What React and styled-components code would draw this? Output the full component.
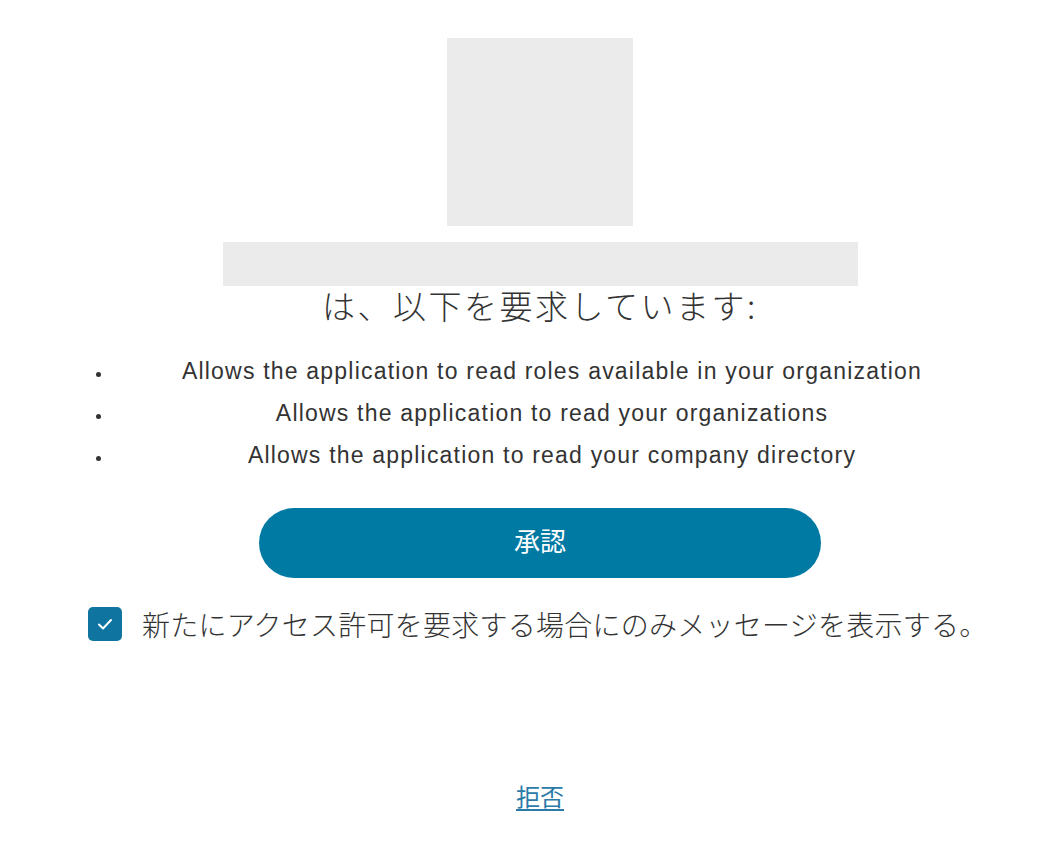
import React, { useState } from 'react'
import styled, { createGlobalStyle } from 'styled-components'

const GlobalStyle = createGlobalStyle`
    html, body {
        margin: 0;
        padding: 0;
        background: #ffffff;
    }

    body {
        font-family: "Liberation Sans", Arial, "Noto Sans CJK JP", sans-serif;
        color: #333333;
    }
`

const Page = styled.main`
    width: 1048px;
    min-height: 842px;
    box-sizing: border-box;
    padding: 38px 0 0 32px;
    display: flex;
    flex-direction: column;
    align-items: center;
`

const AppLogo = styled.div`
    width: 186px;
    height: 188px;
    background: #ebebeb;
`

const AppName = styled.div`
    width: 635px;
    height: 44px;
    margin-top: 16px;
    background: #ebebeb;
`

const Heading = styled.h1`
    margin: 1px 0 0 0;
    font-family: "Noto Sans CJK JP", sans-serif;
    font-weight: 300;
    font-size: 33px;
    line-height: 36px;
    letter-spacing: 2.5px;
    color: #333333;
`

const ScopeList = styled.ul`
    align-self: stretch;
    margin: 27px 56px 0 80px;
    padding: 0;
    list-style: disc outside;
`

const Scope = styled.li`
    text-align: center;
    font-size: 23px;
    line-height: 42px;
    letter-spacing: 1.2px;
    color: #333333;

    &::marker {
        font-size: 16px;
        letter-spacing: 0;
    }
`

const ApproveButton = styled.button`
    width: 562px;
    height: 70px;
    margin-top: 32px;
    border: none;
    border-radius: 35px;
    background: #0079a3;
    color: #ffffff;
    font-family: "Noto Sans CJK JP", sans-serif;
    font-size: 26px;
    line-height: 1;
    padding-bottom: 8px;
    cursor: pointer;
`

const ConsentRow = styled.label`
    align-self: flex-start;
    margin: 28px 0 0 56px;
    display: flex;
    align-items: center;
    gap: 20px;
    cursor: pointer;
`

const Box = styled.span`
    width: 34px;
    height: 34px;
    flex: none;
    border-radius: 5px;
    background: ${({ checked }) => (checked ? '#0f75a0' : '#ffffff')};
    border: ${({ checked }) => (checked ? 'none' : '2px solid #0f75a0')};
    box-sizing: border-box;
    display: flex;
    align-items: center;
    justify-content: center;
`

const HiddenInput = styled.input`
    display: none;
`

const ConsentText = styled.span`
    font-family: "Noto Sans CJK JP", sans-serif;
    font-weight: 300;
    font-size: 28px;
    line-height: 36px;
    letter-spacing: 0.25px;
    color: #333333;
`

const DenyLink = styled.a`
    margin-top: 136px;
    font-family: "Noto Sans CJK JP", sans-serif;
    font-size: 24px;
    color: #2b7aa8;
    text-decoration: underline;
    text-underline-offset: 3px;
    cursor: pointer;
`

const scopes = [
    'Allows the application to read roles available in your organization',
    'Allows the application to read your organizations',
    'Allows the application to read your company directory',
]

export default function App() {
    const [remember, setRemember] = useState(true)

    return (
        <>
            <GlobalStyle />
            <Page>
                <AppLogo />
                <AppName />
                <Heading>は、以下を要求しています:</Heading>
                <ScopeList>
                    {scopes.map((s) => (
                        <Scope key={s}>{s}</Scope>
                    ))}
                </ScopeList>
                <ApproveButton type="button">承認</ApproveButton>
                <ConsentRow>
                    <HiddenInput
                        type="checkbox"
                        checked={remember}
                        onChange={(e) => setRemember(e.target.checked)}
                    />
                    <Box checked={remember}>
                        {remember && (
                            <svg width="18" height="14" viewBox="0 0 18 14" fill="none">
                                <path d="M3 7.5l4 4L15 3" stroke="#ffffff" strokeWidth="2" strokeLinecap="round" strokeLinejoin="round" />
                            </svg>
                        )}
                    </Box>
                    <ConsentText>新たにアクセス許可を要求する場合にのみメッセージを表示する。</ConsentText>
                </ConsentRow>
                <DenyLink>拒否</DenyLink>
            </Page>
        </>
    )
}
